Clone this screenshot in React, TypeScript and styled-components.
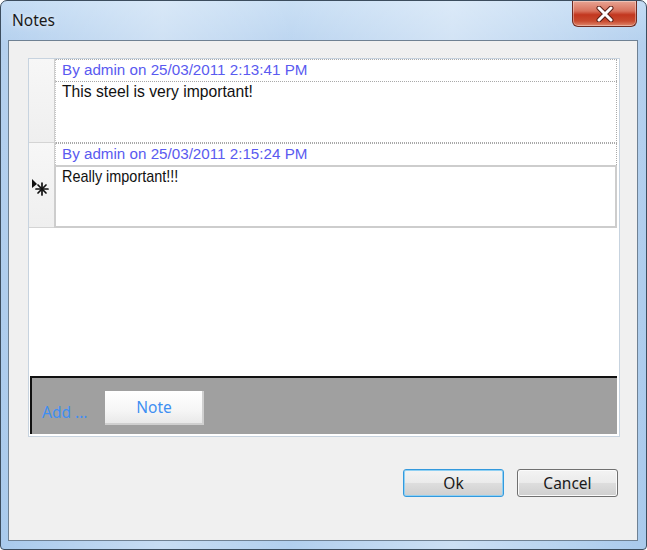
import React from "react";
import styled, { createGlobalStyle } from "styled-components";

const Global = createGlobalStyle`
  html, body { margin: 0; padding: 0; background: #ffffff; }
  body { width: 647px; height: 550px; overflow: hidden; }
`;

const Window = styled.div`
  box-sizing: border-box;
  width: 647px;
  height: 550px;
  display: flex;
  flex-direction: column;
  border: 1px solid #3c4d5e;
  border-radius: 7px 7px 4px 4px;
  padding: 0 8px 8px 7px;
  background:
    linear-gradient(90deg, rgba(255,255,255,0) 0%, rgba(255,255,255,0.35) 25%, rgba(255,255,255,0.1) 45%, rgba(255,255,255,0.4) 70%, rgba(255,255,255,0) 100%),
    linear-gradient(180deg, #c4dcf4 0%, #b4d0ee 8%, #a9caec 100%);
  font-family: "Noto Sans", "Liberation Sans", sans-serif;
`;

const TitleBar = styled.div`
  height: 39px;
  display: flex;
  align-items: flex-start;
  justify-content: space-between;
`;

const Title = styled.div`
  padding: 8px 0 0 4px;
  font-size: 15.5px;
  color: #1a1a1a;
  text-shadow: 0 0 6px rgba(255,255,255,0.9);
`;

const CloseButton = styled.div`
  width: 65px;
  height: 26px;
  margin-right: 1px;
  box-sizing: border-box;
  border: 1px solid #6e2b22;
  border-top: none;
  border-radius: 0 0 6px 6px;
  background: linear-gradient(180deg, #e8a493 0%, #d8725d 40%, #c2371f 55%, #c84a2f 80%, #e0886d 100%);
  box-shadow: inset 0 0 0 1px rgba(255,255,255,0.35);
  display: flex;
  align-items: center;
  justify-content: center;
`;

const Client = styled.div`
  flex: 1;
  display: flex;
  flex-direction: column;
  background: #f0f0f0;
  border: 1px solid #6f8193;
  padding: 17px 17px 0 19px;
`;

const Panel = styled.div`
  height: 379px;
  box-sizing: border-box;
  border: 1px solid #c7d3df;
  background: #ffffff;
  display: flex;
  flex-direction: column;
`;

const Rows = styled.div`
  flex: 1;
  display: flex;
  flex-direction: column;
`;

const Row = styled.div<{ $h: number }>`
  height: ${(p) => p.$h}px;
  display: flex;
`;

const RowHeader = styled.div`
  width: 26px;
  flex: none;
  box-sizing: border-box;
  background: linear-gradient(180deg, #f7f7f7, #efefef);
  border-right: 1px solid #cfcfcf;
  border-bottom: 1px solid #d4d4d4;
  display: flex;
  align-items: center;
  justify-content: center;
`;

const RowContent = styled.div`
  flex: 1;
  display: flex;
  flex-direction: column;
  margin-right: 2px;
`;

const NoteHeader = styled.div`
  height: 22px;
  box-sizing: border-box;
  border-top: 1px dotted #a9a9a9;
  border-right: 1px dotted #a9a9a9;
  border-left: 1px dotted #c5c5c5;
  padding: 1px 0 0 6px;
  font-family: "Liberation Sans", Arial, sans-serif;
  font-size: 15.2px;
  color: #5a5af0;
  line-height: 18px;
`;

const NoteBody = styled.div<{ $editing?: boolean }>`
  flex: 1;
  box-sizing: border-box;
  padding: 1px 6px;
  font-family: "Liberation Sans", Arial, sans-serif;
  font-size: 15.7px;
  line-height: 18px;
  color: #111111;
  border: ${(p) => (p.$editing ? "2px solid #cdcdcd" : "1px dotted #a9a9a9")};
  border-left: ${(p) => (p.$editing ? "2px solid #cdcdcd" : "1px dotted #c5c5c5")};
  margin-left: ${(p) => (p.$editing ? "-1px" : "0")};
`;

const NarrowText = styled.span`
  display: inline-block;
  transform: scaleX(0.92);
  transform-origin: left center;
  white-space: nowrap;
`;

const AddBar = styled.div`
  height: 58px;
  margin: 0 2px 2px 1px;
  box-sizing: border-box;
  background: #a0a0a0;
  border-top: 2px solid #111111;
  border-left: 2px solid #111111;
  display: flex;
  align-items: center;
  padding: 2px 0 0 10px;
  gap: 18px;
`;

const AddLabel = styled.span`
  font-family: "Noto Sans", "Liberation Sans", sans-serif;
  font-size: 15.5px;
  color: #3f8ff2;
  margin-top: 10px;
`;

const NoteButton = styled.div`
  width: 99px;
  height: 34px;
  box-sizing: border-box;
  background: linear-gradient(180deg, #ffffff 0%, #f6f6f6 60%, #e9e9e9 100%);
  border-right: 2px solid #d0d0d0;
  border-bottom: 2px solid #d0d0d0;
  display: flex;
  align-items: center;
  justify-content: center;
  font-size: 15.5px;
  color: #3f8ff2;
  margin-top: 2px;
`;

const Footer = styled.div`
  display: flex;
  justify-content: flex-end;
  gap: 13px;
  padding: 32px 2px 0 0;
`;

const DialogButton = styled.div<{ $default?: boolean }>`
  width: 101px;
  height: 28px;
  box-sizing: border-box;
  border: 1px solid ${(p) => (p.$default ? "#3399dd" : "#707070")};
  border-radius: 3px;
  background: linear-gradient(180deg, #f3f3f3 0%, #ebebeb 48%, #dddddd 52%, #cfcfcf 100%);
  box-shadow: inset 0 0 0 1px ${(p) => (p.$default ? "#8fd0f3" : "#fbfbfb")};
  display: flex;
  align-items: center;
  justify-content: center;
  font-size: 15.5px;
  color: #1a1a1a;
`;

const NewRowIcon = () => (
  <svg width="20" height="20" viewBox="0 0 20 20" style={{ marginTop: 6, marginRight: 2 }}>
    <polygon points="1,1 1,10 6,6" fill="#111" />
    <g stroke="#111" strokeWidth="1.7" strokeLinecap="round">
      <line x1="11" y1="5" x2="11" y2="17" />
      <line x1="5" y1="11" x2="17" y2="11" />
      <line x1="7" y1="7" x2="15" y2="15" />
      <line x1="15" y1="7" x2="7" y2="15" />
    </g>
  </svg>
);

const CloseX = () => (
  <svg width="20" height="16" viewBox="0 0 20 16">
    <path d="M4 2 L16 14 M16 2 L4 14" stroke="#5a2018" strokeWidth="5" strokeLinecap="round" />
    <path d="M4 2 L16 14 M16 2 L4 14" stroke="#ffffff" strokeWidth="3" strokeLinecap="round" />
  </svg>
);

export default function App() {
  return (
    <>
      <Global />
      <Window>
        <TitleBar>
          <Title>Notes</Title>
          <CloseButton>
            <CloseX />
          </CloseButton>
        </TitleBar>
        <Client>
          <Panel>
            <Rows>
              <Row $h={84}>
                <RowHeader />
                <RowContent>
                  <NoteHeader>By admin on 25/03/2011 2:13:41 PM</NoteHeader>
                  <NoteBody>This steel is very important!</NoteBody>
                </RowContent>
              </Row>
              <Row $h={85}>
                <RowHeader>
                  <NewRowIcon />
                </RowHeader>
                <RowContent>
                  <NoteHeader>By admin on 25/03/2011 2:15:24 PM</NoteHeader>
                  <NoteBody $editing>
                    <NarrowText>Really important!!!</NarrowText>
                  </NoteBody>
                </RowContent>
              </Row>
            </Rows>
            <AddBar>
              <AddLabel>Add ...</AddLabel>
              <NoteButton>Note</NoteButton>
            </AddBar>
          </Panel>
          <Footer>
            <DialogButton $default>Ok</DialogButton>
            <DialogButton>Cancel</DialogButton>
          </Footer>
        </Client>
      </Window>
    </>
  );
}
